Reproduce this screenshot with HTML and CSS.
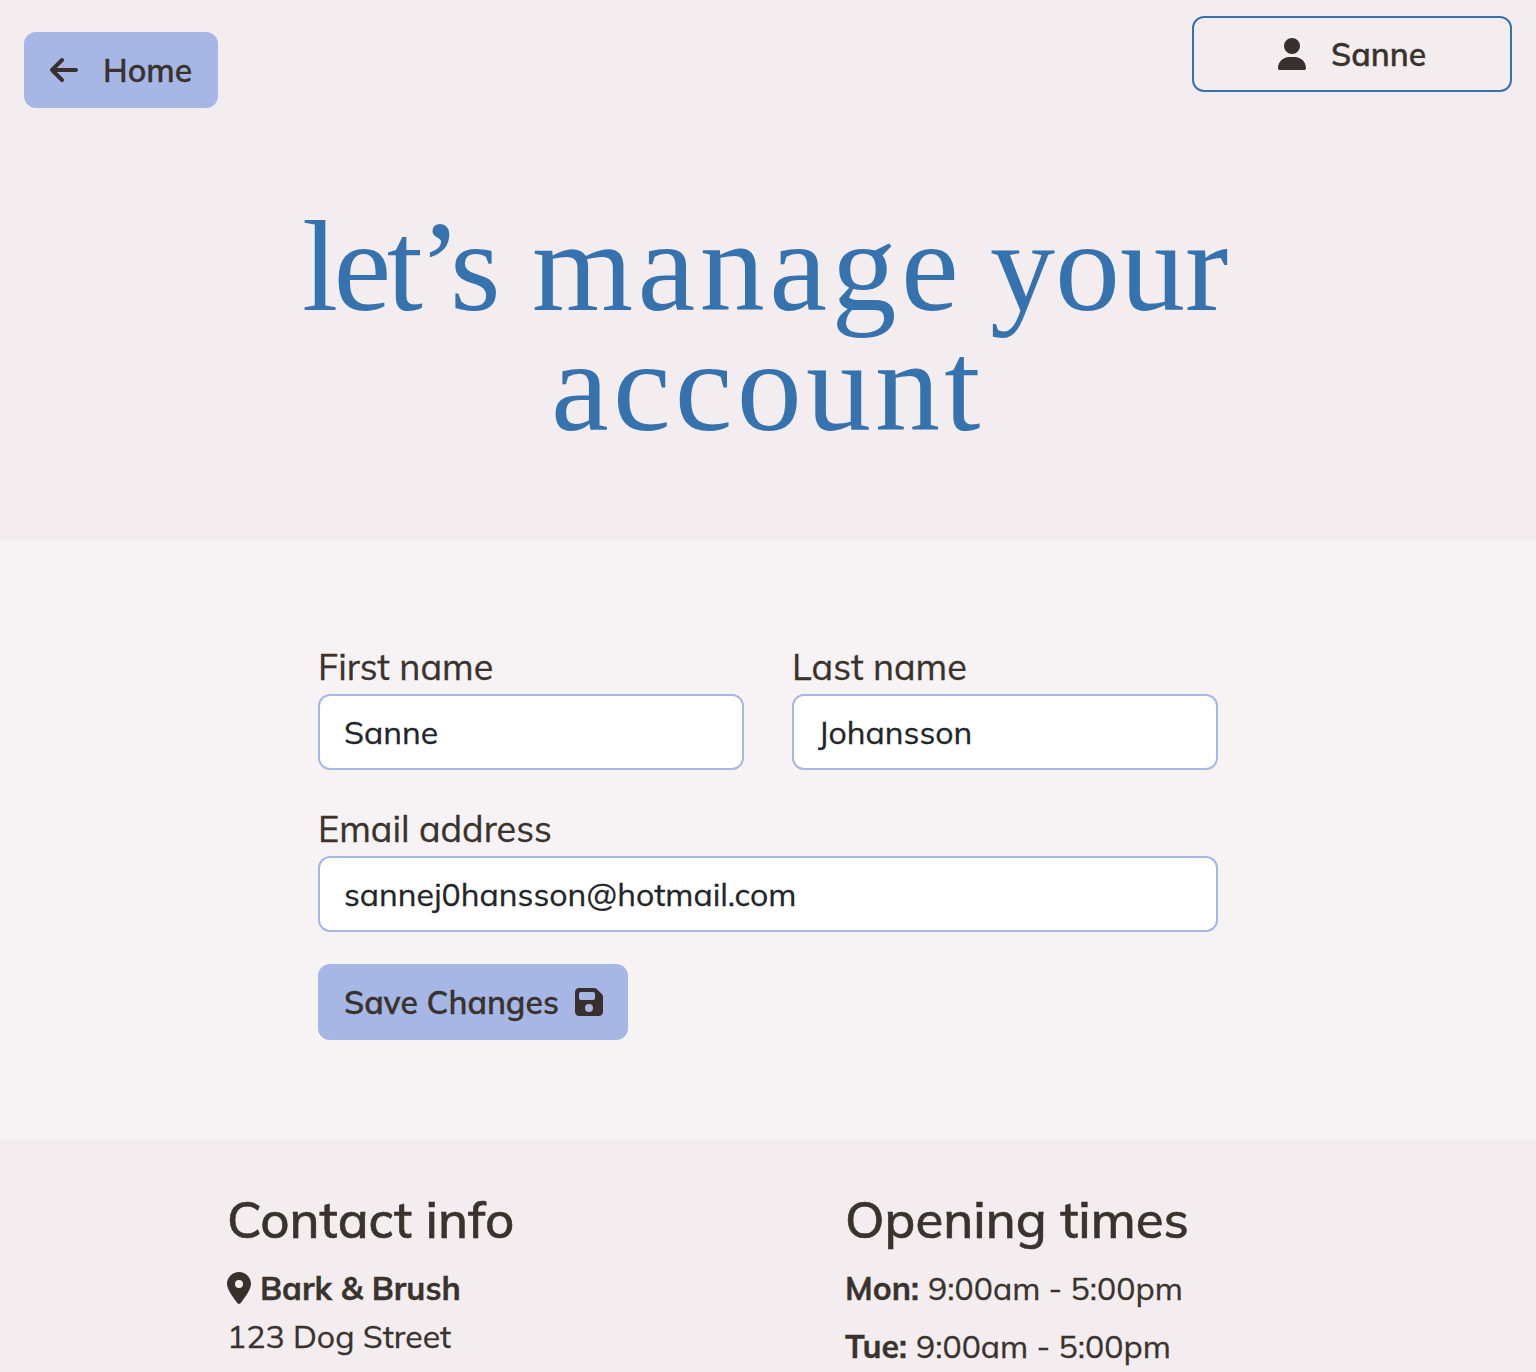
FILE: index.html
```html
<!DOCTYPE html>
<html lang="en">
<head>
<meta charset="utf-8">
<title>Manage your account</title>
<link rel="stylesheet" href="styles.css">
</head>
<body>
<header class="hero">
  <nav class="topbar">
    <a class="btn btn-home"><svg class="icon" width="28" height="32" viewBox="0 0 448 512"><path d="M9.400 233.400c-12.500 12.500-12.500 32.800 0 45.300l160 160c12.500 12.500 32.800 12.500 45.300 0s12.500-32.800 0-45.300L109.200 288H416c17.700 0 32-14.300 32-32s-14.300-32-32-32H109.300l105.300-105.400c12.500-12.500 12.500-32.800 0-45.300s-32.800-12.500-45.300 0l-160 160z"/></svg><span>Home</span></a>
    <a class="btn btn-user"><svg class="icon" width="28" height="32" viewBox="0 0 448 512"><path d="M224 256a128 128 0 1 0 0-256 128 128 0 1 0 0 256zm-45.700 48C79.800 304 0 383.800 0 482.300 0 498.700 13.300 512 29.700 512h388.600c16.400 0 29.700-13.300 29.700-29.700 0-98.500-79.800-178.300-178.300-178.300h-91.400z"/></svg><span>Sanne</span></a>
  </nav>
  <h1 class="title">
    <span class="line"><span class="w-lets">let’s</span><span class="w-manage">manage</span><span class="w-your">your</span></span>
    <span class="line"><span class="w-account">account</span></span>
  </h1>
</header>
<main class="content">
  <form class="form">
    <div class="row">
      <div class="field"><label class="label" for="first">First name</label><input class="input" id="first" value="Sanne"></div>
      <div class="field"><label class="label" for="last">Last name</label><input class="input" id="last" value="Johansson"></div>
    </div>
    <div class="field"><label class="label" for="email">Email address</label><input class="input" id="email" value="sannej0hansson@hotmail.com"></div>
    <button class="btn btn-save" type="button"><span>Save Changes</span><svg class="icon" width="28" height="32" viewBox="0 0 448 512"><path d="M64 32C28.700 32 0 60.700 0 96v320c0 35.300 28.700 64 64 64h320c35.300 0 64-28.700 64-64V173.300c0-17-6.700-33.300-18.700-45.300l-77.300-77.300c-12-12-28.300-18.700-45.300-18.700H64zm0 96c0-17.700 14.300-32 32-32h192c17.700 0 32 14.300 32 32v64c0 17.700-14.300 32-32 32H96c-17.700 0-32-14.300-32-32v-64zm160 160a64 64 0 1 1 0 128 64 64 0 1 1 0-128z"/></svg></button>
  </form>
</main>
<footer class="footer">
  <section class="col">
    <h2 class="heading">Contact info</h2>
    <p class="entry"><svg class="pin" width="24" height="32" viewBox="0 0 384 512"><path d="M215.700 499.200C267 435 384 279.400 384 192 384 86 298 0 192 0S0 86 0 192c0 87.400 117 243 168.300 307.200 12.300 15.300 35.100 15.300 47.400 0zM192 128a64 64 0 1 1 0 128 64 64 0 1 1 0-128z"/></svg><strong>Bark &amp; Brush</strong></p>
    <p class="entry">123 Dog Street</p>
  </section>
  <section class="col">
    <h2 class="heading">Opening times</h2>
    <p class="entry hours"><strong>Mon:</strong><span>9:00am - 5:00pm</span></p>
    <p class="entry hours"><strong>Tue:</strong><span>9:00am - 5:00pm</span></p>
  </section>
</footer>
</body>
</html>
```
FILE: styles.css
```css
* { box-sizing: border-box; }
html { overflow: hidden; }
body {
  margin: 0;
  height: 1372px;
  overflow: hidden;
  background: #f7f3f4;
  color: #39322d;
  font: 400 32px/48px Mulish, Lato, "Liberation Sans", sans-serif;
  -webkit-text-stroke: 0.3px currentColor;
}
.hero { height: 540px; background: #f3edef; }
.topbar { display: flex; justify-content: space-between; align-items: flex-start; height: 206px; padding: 16px 24px 0; }
.btn { display: flex; align-items: center; height: 76px; border: 2px solid #a6b7e6; border-radius: 12px; background: #a6b7e6; color: #39322d; font: inherit; font-weight: 600; white-space: nowrap; }
.icon, .pin { display: block; flex: none; fill: #39302d; }
.btn-home { width: 194px; margin-top: 16px; padding: 0 24px; gap: 25px; }
.btn-user { width: 320px; padding: 0 0 0 84px; gap: 25px; border-color: #3672ae; background: transparent; }
.title { margin: 0; padding-right: 6px; color: #3672ae; font: 400 130px/120px "Liberation Serif", serif; white-space: nowrap; -webkit-text-stroke: 0; }
.line { display: flex; justify-content: center; }
.w-lets { width: 230px; letter-spacing: -4.5px; }
.w-manage { width: 458px; letter-spacing: 4.5px; }
.w-your { width: 238px; letter-spacing: 0; }
.w-account { width: 428px; letter-spacing: 4.2px; }
.content { height: 600px; padding-top: 106px; }
.form { display: flex; flex-direction: column; width: 900px; margin: 0 auto; }
.row { display: grid; grid-template-columns: 1fr 1fr; column-gap: 48px; margin-bottom: 38px; }
.field { display: flex; flex-direction: column; }
.label { height: 48px; font-size: 36px; line-height: 42px; }
.input { width: 100%; height: 76px; padding: 0 24px; border: 2px solid #a6b7e6; border-radius: 12px; background: #fff; color: #212529; font: inherit; outline: 0; -webkit-text-stroke: 0.3px currentColor; }
.btn-save { width: 310px; margin-top: 32px; padding: 0 24px; gap: 16px; }
.footer { display: grid; grid-template-columns: 618px 1fr; height: 232px; padding: 47px 0 0 227px; background: #f3edef; overflow: hidden; }
.heading { margin: 0 0 13px; font-size: 51px; font-weight: 500; line-height: 65px; height: 64px; white-space: nowrap; -webkit-text-stroke: 0.6px currentColor; }
.entry { display: flex; align-items: center; height: 48px; margin: 0; white-space: nowrap; }
.pin { margin-right: 9px; }
.hours { margin-bottom: 10px; gap: 9px; }
strong { font-weight: 700; }
```
